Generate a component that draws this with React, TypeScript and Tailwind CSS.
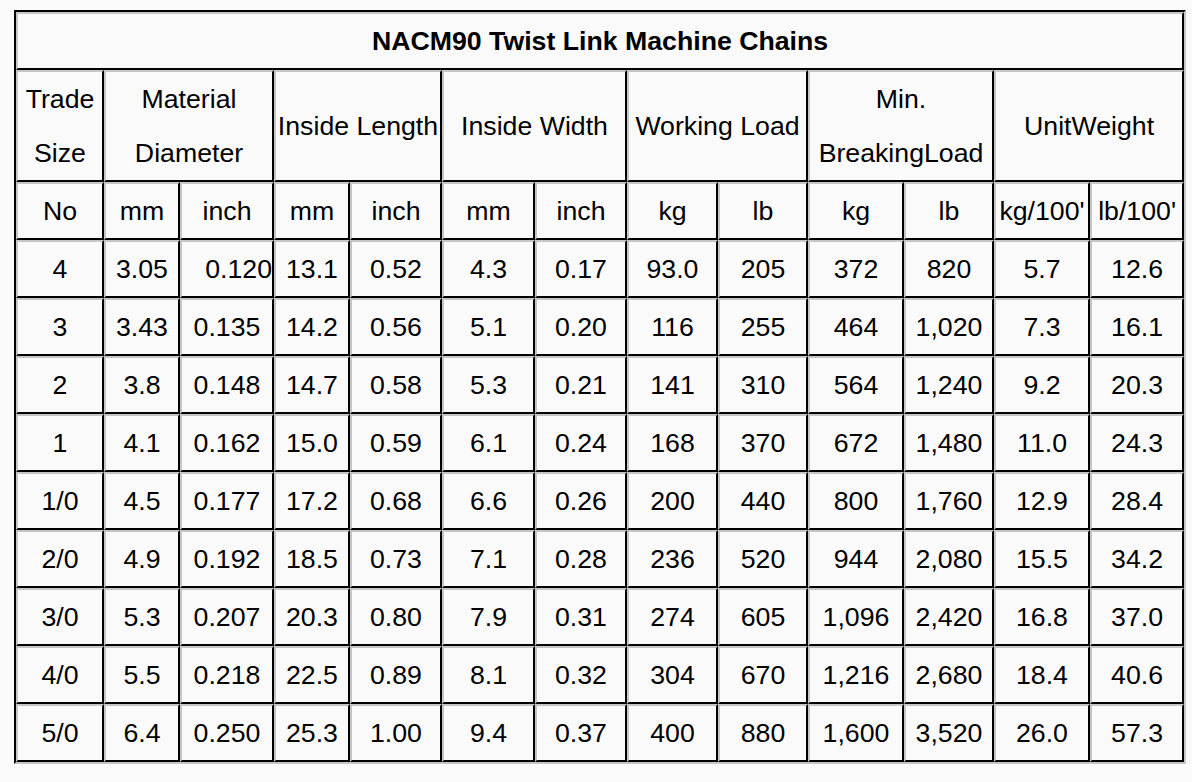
const colWidths = ["w-[88px]", "w-[76px]", "w-[94px]", "w-[76px]", "w-[92px]", "w-[93px]", "w-[92px]", "w-[91px]", "w-[90px]", "w-[96px]", "w-[90px]", "w-[96px]", "w-[94px]"]

const units = ["No", "mm", "inch", "mm", "inch", "mm", "inch", "kg", "lb", "kg", "lb", "kg/100'", "lb/100'"]

const rows: string[][] = [
  ["4", "3.05", "0.120", "13.1", "0.52", "4.3", "0.17", "93.0", "205", "372", "820", "5.7", "12.6"],
  ["3", "3.43", "0.135", "14.2", "0.56", "5.1", "0.20", "116", "255", "464", "1,020", "7.3", "16.1"],
  ["2", "3.8", "0.148", "14.7", "0.58", "5.3", "0.21", "141", "310", "564", "1,240", "9.2", "20.3"],
  ["1", "4.1", "0.162", "15.0", "0.59", "6.1", "0.24", "168", "370", "672", "1,480", "11.0", "24.3"],
  ["1/0", "4.5", "0.177", "17.2", "0.68", "6.6", "0.26", "200", "440", "800", "1,760", "12.9", "28.4"],
  ["2/0", "4.9", "0.192", "18.5", "0.73", "7.1", "0.28", "236", "520", "944", "2,080", "15.5", "34.2"],
  ["3/0", "5.3", "0.207", "20.3", "0.80", "7.9", "0.31", "274", "605", "1,096", "2,420", "16.8", "37.0"],
  ["4/0", "5.5", "0.218", "22.5", "0.89", "8.1", "0.32", "304", "670", "1,216", "2,680", "18.4", "40.6"],
  ["5/0", "6.4", "0.250", "25.3", "1.00", "9.4", "0.37", "400", "880", "1,600", "3,520", "26.0", "57.3"],
]

// each cell: light top/left edge, dark bottom/right edge
const cell = "border-t-2 border-l-2 border-b-2 border-r-2 border-t-[#c6c6c6] border-l-[#c6c6c6] border-b-black border-r-black p-0 text-center align-middle whitespace-nowrap"

const App = () => {
  return (
    <div className="min-h-screen bg-[#fafafa] pt-[10px] pl-[14px] text-black font-['Liberation_Sans',Arial,sans-serif] text-[26.7px] leading-[54px]">
      <table className="table-fixed border-separate border-spacing-0 w-[1172px] border-t-2 border-l-2 border-t-black border-l-black border-b-2 border-r-2 border-b-[#c6c6c6] border-r-[#c6c6c6]">
        <colgroup>
          {colWidths.map((w, i) => <col key={i} className={w} />)}
        </colgroup>
        <tbody>
          <tr>
            <td colSpan={13} className={`${cell} font-bold`}>NACM90 Twist Link Machine Chains</td>
          </tr>
          <tr>
            <td className={cell}>Trade<br />Size</td>
            <td colSpan={2} className={cell}>Material<br />Diameter</td>
            <td colSpan={2} className={cell}>Inside Length</td>
            <td colSpan={2} className={cell}>Inside Width</td>
            <td colSpan={2} className={cell}>Working Load</td>
            <td colSpan={2} className={cell}>Min.<br />BreakingLoad</td>
            <td colSpan={2} className={cell}>UnitWeight</td>
          </tr>
          <tr>
            {units.map((u, i) => <td key={i} className={cell}>{u}</td>)}
          </tr>
          {rows.map((r, ri) => (
            <tr key={ri}>
              {r.map((v, ci) => (
                <td key={ci} className={`${cell} ${ri === 0 && ci === 2 ? "!text-right" : ""}`}>{v}</td>
              ))}
            </tr>
          ))}
        </tbody>
      </table>
    </div>
  )
}

export default App
